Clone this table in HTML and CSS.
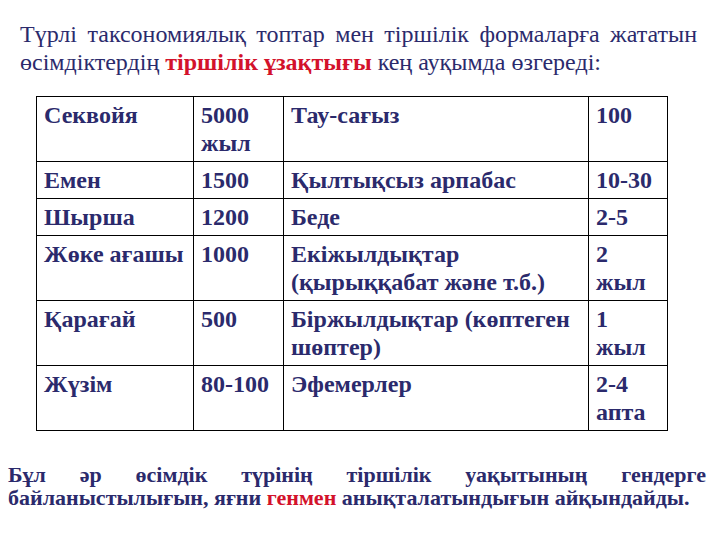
FILE: index.html
```html
<!DOCTYPE html>
<html lang="kk">
<head>
<meta charset="utf-8">
<title>Тіршілік ұзақтығы</title>
<link rel="stylesheet" href="styles.css">
</head>
<body>
<div class="page">
  <p class="intro">Түрлі таксономиялық топтар мен тіршілік формаларға жататын өсімдіктердің <b class="red">тіршілік ұзақтығы</b> кең ауқымда өзгереді:</p>
  <table class="life">
    <colgroup>
      <col class="c1"><col class="c2"><col class="c3"><col class="c4">
    </colgroup>
    <tr><td>Секвойя</td><td>5000<br>жыл</td><td>Тау-сағыз</td><td>100</td></tr>
    <tr><td>Емен</td><td>1500</td><td>Қылтықсыз арпабас</td><td>10-30</td></tr>
    <tr><td>Шырша</td><td>1200</td><td>Беде</td><td>2-5</td></tr>
    <tr><td>Жөке ағашы</td><td>1000</td><td>Екіжылдықтар<br>(қырыққабат және т.б.)</td><td>2<br>жыл</td></tr>
    <tr><td>Қарағай</td><td>500</td><td>Біржылдықтар (көптеген шөптер)</td><td>1<br>жыл</td></tr>
    <tr><td>Жүзім</td><td>80-100</td><td>Эфемерлер</td><td>2-4<br>апта</td></tr>
  </table>
  <p class="outro">Бұл әр өсімдік түрінің тіршілік уақытының гендерге байланыстылығын, яғни <span class="red">генмен</span> анықталатындығын айқындайды.</p>
</div>
</body>
</html>
```
FILE: styles.css
```css
html, body {
  margin: 0;
  padding: 0;
  background: #ffffff;
}
.page {
  width: 720px;
  height: 540px;
  overflow: hidden;
  font-family: "Liberation Serif", "Times New Roman", serif;
  color: #2b2a6c;
}
.intro {
  margin: 20px 23px 0 20px;
  font-size: 24px;
  line-height: 28px;
  text-align: justify;
  text-align-last: left;
}
.red {
  color: #d3122b;
  font-weight: bold;
}
.life {
  margin: 20px 0 0 36px;
  border-collapse: collapse;
  table-layout: fixed;
  width: 631px;
  font-size: 24px;
  line-height: 28px;
  font-weight: bold;
}
.c1 { width: 157px; }
.c2 { width: 90px; }
.c3 { width: 305px; }
.c4 { width: 79px; }
.life td {
  border: 1px solid #000;
  vertical-align: top;
  padding: 4px 4px 4px 7px;
  text-align: left;
}
.outro {
  margin: 32px 14px 0 8px;
  font-size: 22px;
  line-height: 23px;
  font-weight: bold;
  text-align: justify;
}
```
